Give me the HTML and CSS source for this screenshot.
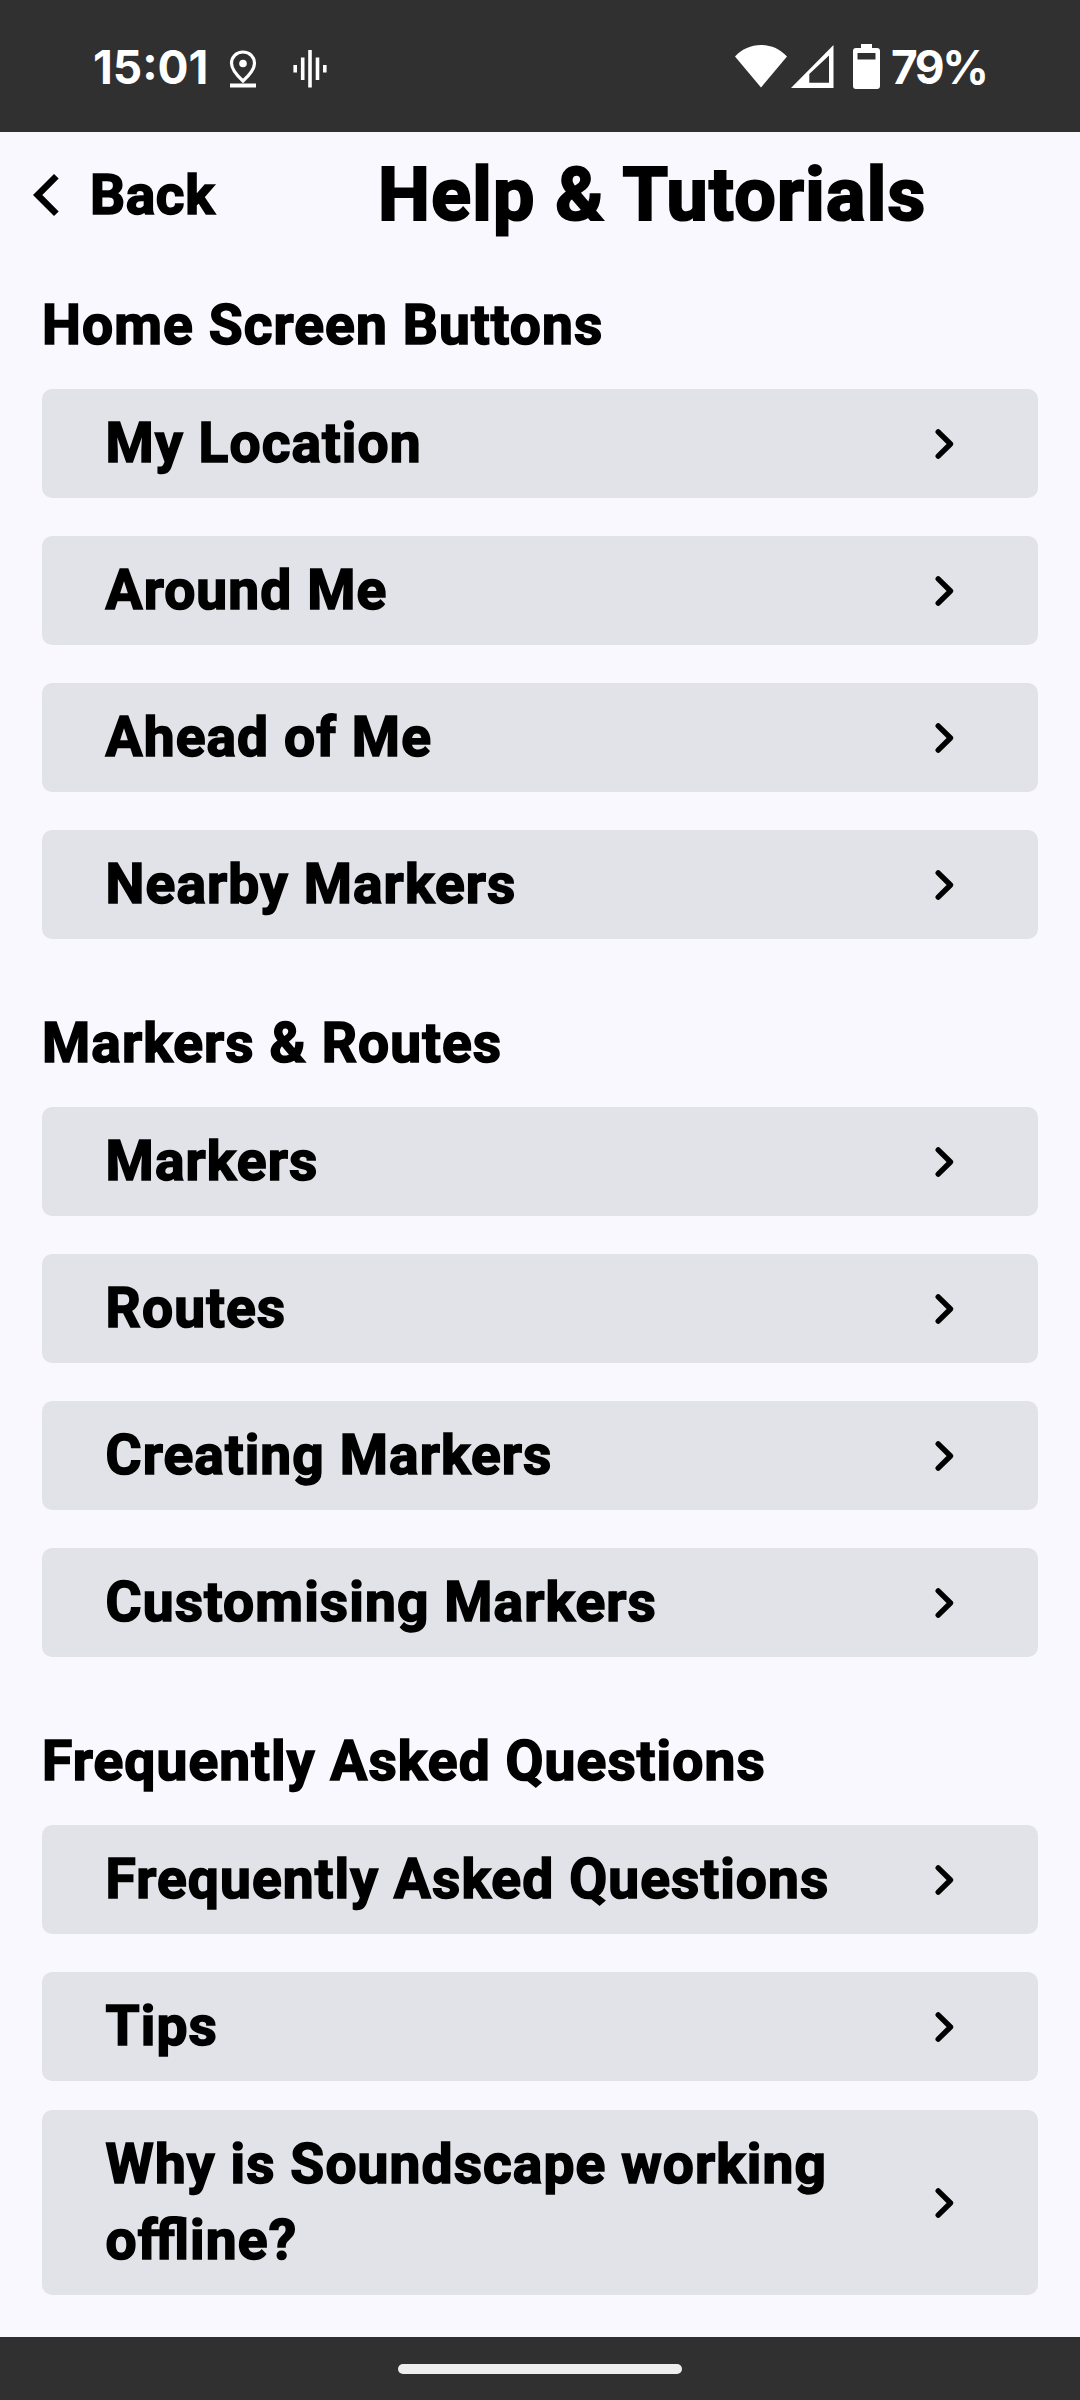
FILE: index.html
```html
<!DOCTYPE html>
<html lang="en">
<head>
<meta charset="utf-8">
<title>Help &amp; Tutorials</title>
<link rel="stylesheet" href="styles.css">
</head>
<body>
<svg class="sprite" width="0" height="0">
  <symbol id="chevron" viewBox="0 0 24 36"><path d="M5.2 5.800 17.500 18 5.200 30.200" fill="none" stroke="#000" stroke-width="5.400" stroke-linecap="round" stroke-linejoin="round"/></symbol>
</svg>
<div class="status-bar">
  <div class="status-left">
    <span class="clock">15:01</span>
    <svg class="pin" width="28" height="40" viewBox="0 0 28 40"><path d="M14 3C7.200 3 2.500 8 2.500 14.200c0 6 4.500 11.300 11.500 17.800 7-6.500 11.500-11.800 11.500-17.800C25.500 8 20.800 3 14 3z" fill="none" stroke="#fff" stroke-width="3.200"/><circle cx="14" cy="14.500" r="3.800" fill="#fff"/><path d="M1 36.500h26" stroke="#fff" stroke-width="4"/></svg>
    <svg class="wave" width="34" height="38" viewBox="0 0 34 38"><path d="M2.200 15v7.500M9.700 7.500v22.500M17 0v37.500M24.500 7.500v22.500M31.800 15v7.500" stroke="#fff" stroke-width="3.600"/></svg>
  </div>
  <div class="status-right">
    <svg class="wifi" width="52" height="44" viewBox="0 0 52 44"><path d="M0 12.500C7 5 16 1 26 1s19 4 26 11.500L26 43.500z" fill="#fff"/></svg>
    <svg class="signal" width="43" height="44" viewBox="0 0 43 44"><path d="M42.500 1v43H0zM38 11.500 18.300 30v8.700H38z" fill="#fff" fill-rule="evenodd"/></svg>
    <svg class="battery" width="27" height="45" viewBox="0 0 27 45"><path d="M8 0h11v4h5a3 3 0 0 1 3 3v35a3 3 0 0 1-3 3H3a3 3 0 0 1-3-3V7a3 3 0 0 1 3-3h5zM4.500 9v6.500h18V9z" fill="#fff" fill-rule="evenodd"/></svg>
    <span class="percent">79%</span>
  </div>
</div>
<header class="app-bar">
  <a class="back"><svg width="26" height="42" viewBox="0 0 26 42"><path d="M21 0l4.700 4.500L9.300 21l16.400 16.500L21 42 0 21z"/></svg><span>Back</span></a>
  <h1 class="title">Help &amp; Tutorials</h1>
</header>
<main class="content">
  <h2 class="heading first">Home Screen Buttons</h2>
  <div class="list">
    <div class="card"><span>My Location</span><svg class="chev"><use href="#chevron"/></svg></div>
    <div class="card"><span>Around Me</span><svg class="chev"><use href="#chevron"/></svg></div>
    <div class="card"><span>Ahead of Me</span><svg class="chev"><use href="#chevron"/></svg></div>
    <div class="card"><span>Nearby Markers</span><svg class="chev"><use href="#chevron"/></svg></div>
  </div>
  <h2 class="heading">Markers &amp; Routes</h2>
  <div class="list">
    <div class="card"><span>Markers</span><svg class="chev"><use href="#chevron"/></svg></div>
    <div class="card"><span>Routes</span><svg class="chev"><use href="#chevron"/></svg></div>
    <div class="card"><span>Creating Markers</span><svg class="chev"><use href="#chevron"/></svg></div>
    <div class="card"><span>Customising Markers</span><svg class="chev"><use href="#chevron"/></svg></div>
  </div>
  <h2 class="heading">Frequently Asked Questions</h2>
  <div class="list">
    <div class="card"><span>Frequently Asked Questions</span><svg class="chev"><use href="#chevron"/></svg></div>
    <div class="card"><span>Tips</span><svg class="chev"><use href="#chevron"/></svg></div>
    <div class="card tall"><span>Why is Soundscape working offline?</span><svg class="chev"><use href="#chevron"/></svg></div>
  </div>
</main>
<nav class="nav-bar"><div class="handle"></div></nav>
</body>
</html>
```
FILE: styles.css
```css
* { box-sizing: border-box; }
body {
  margin: 0;
  width: 1080px;
  height: 2400px;
  display: flex;
  flex-direction: column;
  overflow: hidden;
  background: #f9f8ff;
  color: #000;
  font: 700 55.1px/76px Roboto, sans-serif;
  letter-spacing: 1.1px;
  font-feature-settings: "liga" 1;
  -webkit-text-stroke: 1.6px currentColor;
}
svg { display: block; flex: none; }
.sprite { position: absolute; }
.status-bar {
  height: 132px;
  flex: none;
  padding: 0 93px;
  display: flex;
  justify-content: space-between;
  align-items: center;
  background: #303030;
  color: #fff;
  font: 700 46px/60px Inter, sans-serif;
  letter-spacing: 0;
  -webkit-text-stroke: 0;
}
.status-left, .status-right { display: flex; align-items: center; }
.clock { width: 136px; margin-top: 2px; }
.pin, .wave { margin-top: 5px; }
.wave { margin-left: 36px; }
.signal { margin-left: 4px; }
.battery { margin-left: 19px; }
.percent { margin: 2px 0 0 11px; width: 96px; letter-spacing: -2.5px; }
.app-bar {
  height: 126px;
  flex: none;
  padding-left: 33px;
  display: flex;
  align-items: center;
}
.back { display: flex; align-items: center; width: 345px; letter-spacing: 0.6px; }
.back span { margin-left: 31px; }
.title {
  margin: 0;
  font-size: 73.5px;
  line-height: 96px;
  letter-spacing: 1.3px;
  white-space: nowrap;
  -webkit-text-stroke-width: 2.2px;
}
.content { flex: 1; padding: 0 42px; }
.heading { margin: 0; padding: 66px 0 26px; font-size: inherit; }
.heading.first { padding-top: 29px; }
.list { display: flex; flex-direction: column; gap: 38px; }
.card {
  min-height: 109px;
  padding: 16px 81px 17px 63.6px;
  display: flex;
  align-items: center;
  justify-content: space-between;
  border-radius: 10px;
  background: #e2e3e8;
}
.card.tall { height: 185px; margin-top: -9px; }
.chev { width: 24px; height: 36px; margin-top: 1px; }
.nav-bar {
  height: 63px;
  flex: none;
  padding-top: 27px;
  background: #303030;
}
.handle { width: 284px; height: 10px; margin: 0 auto; border-radius: 5px; background: #eee; }
```
